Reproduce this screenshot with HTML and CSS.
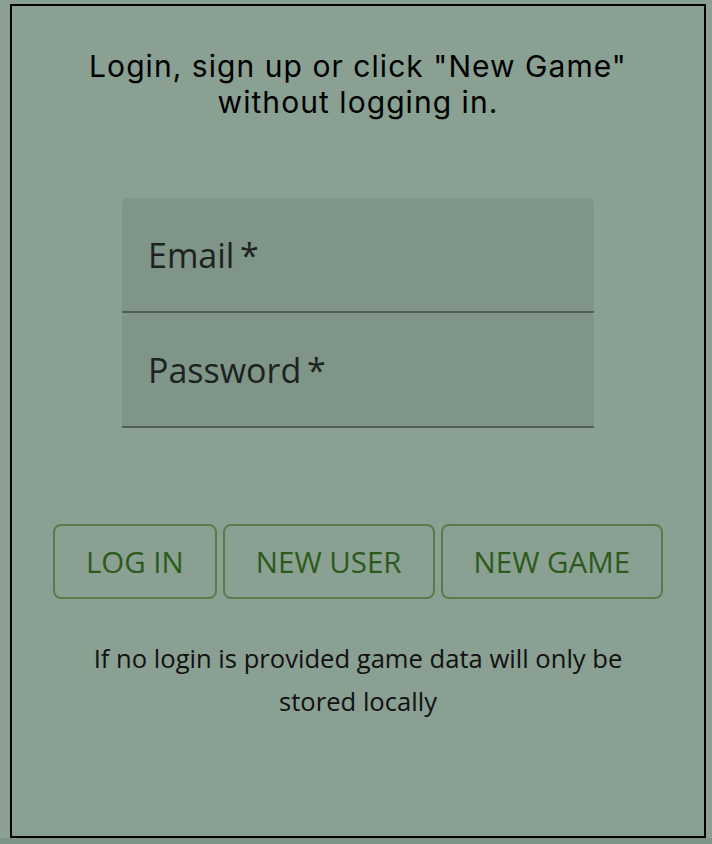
FILE: index.html
```html
<!DOCTYPE html>
<html lang="en">
<head>
<meta charset="utf-8">
<title>Login</title>
<link rel="stylesheet" href="styles.css">
</head>
<body>
<div class="page">
  <div class="card">
    <h1 class="title">Login, sign up or click "New Game" without logging in.</h1>
    <form class="fields">
      <div class="field"><span class="label">Email<span class="req">&thinsp;*</span></span></div>
      <div class="field"><span class="label">Password<span class="req">&thinsp;*</span></span></div>
    </form>
    <div class="actions">
      <button class="btn" type="button">LOG IN</button>
      <button class="btn" type="button">NEW USER</button>
      <button class="btn" type="button">NEW GAME</button>
    </div>
    <p class="note">If no login is provided game data will only be stored locally</p>
  </div>
</div>
</body>
</html>
```
FILE: styles.css
```css
html { background: #7e9486; }
body { margin: 0; }
.page {
  background: #89a092;
  padding: 4px 6px 0 10px;
  height: 838px;
  box-sizing: border-box;
}
.card {
  border: 2px solid #000;
  height: 834px;
  box-sizing: border-box;
  display: flex;
  flex-direction: column;
  align-items: center;
}
.title {
  margin: 42px 0 0;
  max-width: 610px;
  font: 400 30px/36px Inter, "Liberation Sans", sans-serif;
  letter-spacing: 1.05px;
  color: #000;
  text-align: center;
}
.fields {
  margin-top: 78px;
  width: 472px;
  display: flex;
  flex-direction: column;
}
.field {
  height: 115px;
  box-sizing: border-box;
  background: #7f9588;
  border-radius: 5px 5px 0 0;
  border-bottom: 2px solid #4f5d53;
  padding: 37px 0 0 26px;
}
.label {
  font: 400 34px/40px "Open Sans", sans-serif;
  color: #1c231e;
}
.req { font-weight: 500; }
.actions {
  margin-top: 96px;
  display: flex;
  gap: 6px;
}
.btn {
  height: 75px;
  padding: 0 31px;
  background: transparent;
  border: 2px solid #5b7b4c;
  border-radius: 8px;
  font: 500 29.5px/1 "Open Sans", sans-serif;
  color: #2d5a1b;
}
.note {
  margin: 39px 0 0;
  max-width: 590px;
  font: 400 25.6px/42.5px "Open Sans", sans-serif;
  color: #111;
  text-align: center;
}
```
